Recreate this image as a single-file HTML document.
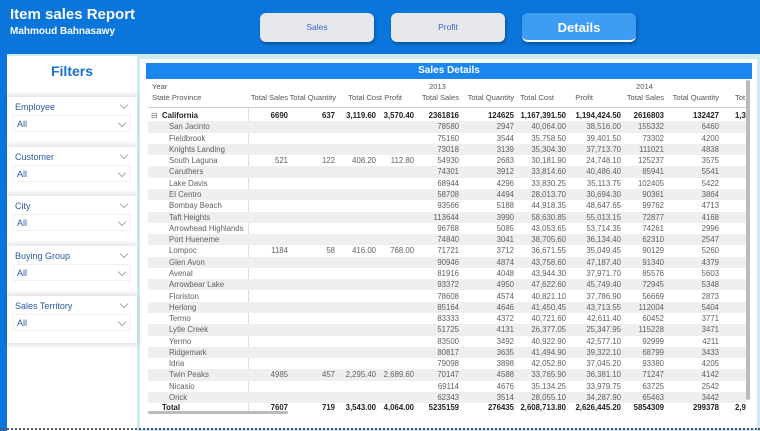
<!DOCTYPE html>
<html><head><meta charset="utf-8"><style>
*{margin:0;padding:0;box-sizing:border-box}
body{width:760px;height:431px;overflow:hidden;background:#cde9f1;font-family:"Liberation Sans",sans-serif;position:relative}
.hdr{position:absolute;left:0;top:0;width:760px;height:54px;background:#0a76dc}
.t1{position:absolute;left:10px;top:6px;color:#fff;font-weight:bold;font-size:15px}
.t2{position:absolute;left:10px;top:26px;color:#fff;font-weight:bold;font-size:10px}
.btn{position:absolute;top:13px;width:114px;height:29px;border-radius:6px;background:#e6e8ec;color:#3a66c8;font-size:8.5px;text-align:center;line-height:29px;box-shadow:1px 2px 3px rgba(0,0,0,.3)}
.btn.on{background:#3e9cf2;color:#fff;font-size:13px;font-weight:bold;border-bottom:2px solid #fff}
.lstrip{position:absolute;left:0;top:54px;width:7px;height:377px;background:#0a76dc}
.fp{position:absolute;left:7px;top:56px;width:130px;height:375px;background:#fff}
.fp h2{position:absolute;left:0;width:130px;top:7px;text-align:center;color:#1a70d0;font-size:14px}
.card{position:absolute;left:0;width:130px;height:47px;background:#fff;box-shadow:0 -3px 4px rgba(0,0,0,.1)}
.card .l{position:absolute;left:8px;top:5px;font-size:9px;color:#2a5aa0}
.card .dd{position:absolute;left:6px;top:18px;width:118px;height:17px;border:1px solid #f0f0f0}
.card .dd span{position:absolute;left:3px;top:3px;font-size:9px;color:#2a5aa0}
.chev{position:absolute;width:6px;height:6px;border-right:1px solid #aaa;border-bottom:1px solid #aaa;transform:rotate(45deg)}
.tp{position:absolute;left:140px;top:59px;width:617px;height:369px;background:#fff}
.bar{position:absolute;left:146px;top:63px;width:606px;height:16px;background:#1a86ee;color:#fff;font-weight:bold;font-size:10px;text-align:center;line-height:16px}
.rows{position:absolute;left:0;top:0;width:752px;height:431px;overflow:hidden;font-size:7.8px;color:#606060}
.r{position:absolute;left:0;width:752px;height:11.3px;line-height:11.3px}
.r.g::before{content:"";position:absolute;left:148px;width:598px;height:11.3px;background:#efefef}
.r span{position:absolute;white-space:nowrap}
.n{left:169px}
.c1{right:464px}.c2{right:417px}.c3{right:376px}.c4{right:338px}.c5{right:293px}.c6{right:238px}.c7{right:186px}.c8{right:131px}.c9{right:88px}.c10{right:33px}.c11{left:735px}
.b{color:#222;font-weight:bold}
.h span{position:absolute;white-space:nowrap;color:#555}
.dots{position:absolute;left:0;top:428px;width:760px;border-top:2px dotted #556}
</style></head><body>
<div class="hdr">
<div class="t1">Item sales Report</div>
<div class="t2">Mahmoud Bahnasawy</div>
<div class="btn" style="left:260px">Sales</div>
<div class="btn" style="left:391px">Profit</div>
<div class="btn on" style="left:522px">Details</div>
</div>
<div class="lstrip"></div>
<div class="fp"><h2>Filters</h2>
<div class="card" style="top:41px"><div class="l">Employee</div><div class="chev" style="left:114px;top:5px"></div><div class="dd"><span>All</span><div class="chev" style="left:105px;top:4px"></div></div></div>
<div class="card" style="top:91px"><div class="l">Customer</div><div class="chev" style="left:114px;top:5px"></div><div class="dd"><span>All</span><div class="chev" style="left:105px;top:4px"></div></div></div>
<div class="card" style="top:140px"><div class="l">City</div><div class="chev" style="left:114px;top:5px"></div><div class="dd"><span>All</span><div class="chev" style="left:105px;top:4px"></div></div></div>
<div class="card" style="top:190px"><div class="l">Buying Group</div><div class="chev" style="left:114px;top:5px"></div><div class="dd"><span>All</span><div class="chev" style="left:105px;top:4px"></div></div></div>
<div class="card" style="top:240px;box-shadow:0 -3px 4px rgba(0,0,0,.1),0 3px 4px rgba(0,0,0,.1)"><div class="l">Sales Territory</div><div class="chev" style="left:114px;top:5px"></div><div class="dd"><span>All</span><div class="chev" style="left:105px;top:4px"></div></div></div>
</div>
<div class="tp"></div>
<div class="bar">Sales Details</div>
<div style="position:absolute;left:148px;top:107px;width:598px;border-top:1px solid #ccc"></div>
<div style="position:absolute;left:248px;top:108px;height:304px;border-left:1px solid #cfe0ee"></div>
<div style="position:absolute;left:746px;top:80px;width:4px;height:320px;background:#bbb;border-radius:2px"></div>
<div style="position:absolute;left:148px;top:411px;width:140px;height:3px;background:#bbb;border-radius:2px"></div>
<div class="rows">
<div class="h" style="position:absolute;left:0;top:82px;width:752px;height:24px;font-size:7.6px">
<span style="left:152px;top:0">Year</span><span style="left:152px;top:11px">State Province</span>
<span style="left:429px;top:0">2013</span><span style="left:636px;top:0">2014</span>
<span class="c1" style="top:11px">Total Sales</span><span style="right:416px;top:11px">Total Quantity</span><span style="right:370px;top:11px">Total Cost</span><span style="right:350px;top:11px">Profit</span>
<span class="c5" style="top:11px">Total Sales</span><span class="c6" style="top:11px">Total Quantity</span><span style="right:198px;top:11px">Total Cost</span><span style="right:159px;top:11px">Profit</span><span class="c9" style="top:11px">Total Sales</span><span class="c10" style="top:11px">Total Quantity</span><span class="c11" style="top:11px">Tot</span>
</div>
<div class="r b" style="top:110px"><span style="left:151px;font-weight:normal;color:#777">⊟</span><span style="left:162px">California</span><span class="c1">6690</span><span class="c2">637</span><span class="c3">3,119.60</span><span class="c4">3,570.40</span><span class="c5">2361816</span><span class="c6">124625</span><span class="c7">1,167,391.50</span><span class="c8">1,194,424.50</span><span class="c9">2616803</span><span class="c10">132427</span><span class="c11">1,3</span></div>
<div class="r g" style="top:121.3px"><span class="n">San Jacinto</span><span class="c5">78580</span><span class="c6">2947</span><span class="c7">40,064.00</span><span class="c8">38,516.00</span><span class="c9">155332</span><span class="c10">6460</span></div>
<div class="r" style="top:132.6px"><span class="n">Fieldbrook</span><span class="c5">75160</span><span class="c6">3544</span><span class="c7">35,758.50</span><span class="c8">39,401.50</span><span class="c9">73302</span><span class="c10">4200</span></div>
<div class="r g" style="top:143.8px"><span class="n">Knights Landing</span><span class="c5">73018</span><span class="c6">3139</span><span class="c7">35,304.30</span><span class="c8">37,713.70</span><span class="c9">111021</span><span class="c10">4838</span></div>
<div class="r" style="top:155.1px"><span class="n">South Laguna</span><span class="c1">521</span><span class="c2">122</span><span class="c3">408.20</span><span class="c4">112.80</span><span class="c5">54930</span><span class="c6">2683</span><span class="c7">30,181.90</span><span class="c8">24,748.10</span><span class="c9">125237</span><span class="c10">3575</span></div>
<div class="r g" style="top:166.4px"><span class="n">Caruthers</span><span class="c5">74301</span><span class="c6">3912</span><span class="c7">33,814.60</span><span class="c8">40,486.40</span><span class="c9">85941</span><span class="c10">5541</span></div>
<div class="r" style="top:177.7px"><span class="n">Lake Davis</span><span class="c5">68944</span><span class="c6">4296</span><span class="c7">33,830.25</span><span class="c8">35,113.75</span><span class="c9">102405</span><span class="c10">5422</span></div>
<div class="r g" style="top:189px"><span class="n">El Centro</span><span class="c5">58708</span><span class="c6">4494</span><span class="c7">28,013.70</span><span class="c8">30,694.30</span><span class="c9">90361</span><span class="c10">3864</span></div>
<div class="r" style="top:200.2px"><span class="n">Bombay Beach</span><span class="c5">93566</span><span class="c6">5188</span><span class="c7">44,918.35</span><span class="c8">48,647.65</span><span class="c9">99762</span><span class="c10">4713</span></div>
<div class="r g" style="top:211.5px"><span class="n">Taft Heights</span><span class="c5">113644</span><span class="c6">3990</span><span class="c7">58,630.85</span><span class="c8">55,013.15</span><span class="c9">72877</span><span class="c10">4168</span></div>
<div class="r" style="top:222.8px"><span class="n">Arrowhead Highlands</span><span class="c5">96768</span><span class="c6">5085</span><span class="c7">43,053.65</span><span class="c8">53,714.35</span><span class="c9">74261</span><span class="c10">2996</span></div>
<div class="r g" style="top:234.1px"><span class="n">Port Hueneme</span><span class="c5">74840</span><span class="c6">3041</span><span class="c7">38,705.60</span><span class="c8">36,134.40</span><span class="c9">62310</span><span class="c10">2547</span></div>
<div class="r" style="top:245.4px"><span class="n">Lompoc</span><span class="c1">1184</span><span class="c2">58</span><span class="c3">416.00</span><span class="c4">768.00</span><span class="c5">71721</span><span class="c6">3712</span><span class="c7">36,671.55</span><span class="c8">35,049.45</span><span class="c9">90129</span><span class="c10">5260</span></div>
<div class="r g" style="top:256.6px"><span class="n">Glen Avon</span><span class="c5">90946</span><span class="c6">4874</span><span class="c7">43,758.60</span><span class="c8">47,187.40</span><span class="c9">91340</span><span class="c10">4379</span></div>
<div class="r" style="top:267.9px"><span class="n">Avenal</span><span class="c5">81916</span><span class="c6">4048</span><span class="c7">43,944.30</span><span class="c8">37,971.70</span><span class="c9">85576</span><span class="c10">5603</span></div>
<div class="r g" style="top:279.2px"><span class="n">Arrowbear Lake</span><span class="c5">93372</span><span class="c6">4950</span><span class="c7">47,622.60</span><span class="c8">45,749.40</span><span class="c9">72945</span><span class="c10">5348</span></div>
<div class="r" style="top:290.5px"><span class="n">Floriston</span><span class="c5">78608</span><span class="c6">4574</span><span class="c7">40,821.10</span><span class="c8">37,786.90</span><span class="c9">56669</span><span class="c10">2873</span></div>
<div class="r g" style="top:301.8px"><span class="n">Herlong</span><span class="c5">85164</span><span class="c6">4646</span><span class="c7">41,450.45</span><span class="c8">43,713.55</span><span class="c9">112004</span><span class="c10">5404</span></div>
<div class="r" style="top:313px"><span class="n">Termo</span><span class="c5">83333</span><span class="c6">4372</span><span class="c7">40,721.60</span><span class="c8">42,611.40</span><span class="c9">60452</span><span class="c10">3771</span></div>
<div class="r g" style="top:324.3px"><span class="n">Lytle Creek</span><span class="c5">51725</span><span class="c6">4131</span><span class="c7">26,377.05</span><span class="c8">25,347.95</span><span class="c9">115228</span><span class="c10">3471</span></div>
<div class="r" style="top:335.6px"><span class="n">Yermo</span><span class="c5">83500</span><span class="c6">3492</span><span class="c7">40,922.90</span><span class="c8">42,577.10</span><span class="c9">92999</span><span class="c10">4211</span></div>
<div class="r g" style="top:346.9px"><span class="n">Ridgemark</span><span class="c5">80817</span><span class="c6">3635</span><span class="c7">41,494.90</span><span class="c8">39,322.10</span><span class="c9">68799</span><span class="c10">3433</span></div>
<div class="r" style="top:358.2px"><span class="n">Idria</span><span class="c5">79098</span><span class="c6">3898</span><span class="c7">42,052.80</span><span class="c8">37,045.20</span><span class="c9">93380</span><span class="c10">4205</span></div>
<div class="r g" style="top:369.4px"><span class="n">Twin Peaks</span><span class="c1">4985</span><span class="c2">457</span><span class="c3">2,295.40</span><span class="c4">2,689.60</span><span class="c5">70147</span><span class="c6">4588</span><span class="c7">33,765.90</span><span class="c8">36,381.10</span><span class="c9">71247</span><span class="c10">4142</span></div>
<div class="r" style="top:380.7px"><span class="n">Nicasio</span><span class="c5">69114</span><span class="c6">4676</span><span class="c7">35,134.25</span><span class="c8">33,979.75</span><span class="c9">63725</span><span class="c10">2542</span></div>
<div class="r g" style="top:392px"><span class="n">Orick</span><span class="c5">62343</span><span class="c6">3514</span><span class="c7">28,055.10</span><span class="c8">34,287.90</span><span class="c9">65463</span><span class="c10">3442</span></div>
<div class="r b" style="top:402px"><span style="left:162px">Total</span><span class="c1">7607</span><span class="c2">719</span><span class="c3">3,543.00</span><span class="c4">4,064.00</span><span class="c5">5235159</span><span class="c6">276435</span><span class="c7">2,608,713.80</span><span class="c8">2,626,445.20</span><span class="c9">5854309</span><span class="c10">299378</span><span class="c11">2,9</span></div>
</div>
<div class="dots"></div>
</body></html>
